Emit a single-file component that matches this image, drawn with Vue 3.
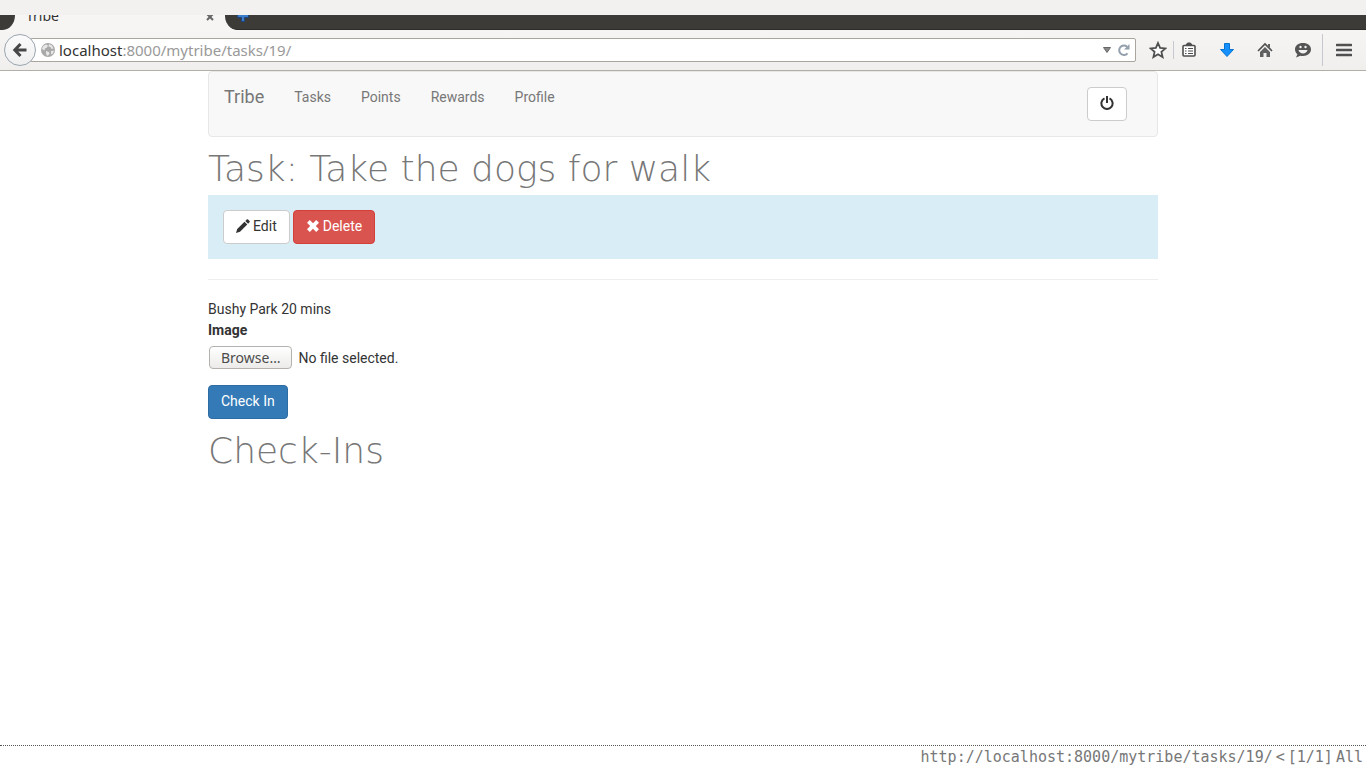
<script setup>
import { ref } from 'vue'

const links = ['Tasks', 'Points', 'Rewards', 'Profile']
const address = ref('localhost:8000/mytribe/tasks/19/')
const fileName = ref('No file selected.')

function pickFile(event) {
  const file = event.target.files[0]
  fileName.value = file ? file.name : 'No file selected.'
}
</script>

<template>
  <div class="window">
    <header class="chrome">
      <div class="titlebar"></div>
      <div class="tabstrip">
        <div class="tab">
          <span class="tab-title">Tribe</span>
          <button class="tab-close" aria-label="Close tab">
            <svg width="8" height="8" viewBox="0 0 8 8"><path d="M1 1l6 6M7 1L1 7" stroke="#666" stroke-width="2" /></svg>
          </button>
        </div>
        <div class="strip-rest">
          <button class="new-tab" aria-label="New tab">
            <svg width="12" height="12" viewBox="0 0 12 12"><path d="M4.5 .5h3v4h4v3h-4v4h-3v-4h-4v-3h4z" fill="#3d7cc9" stroke="#1c447d" /></svg>
          </button>
        </div>
      </div>
      <div class="toolbar">
        <button class="back" aria-label="Back">
          <svg width="16" height="16" viewBox="0 0 16 16"><path d="M8.500 2L2.800 8l5.700 6M3 8h11.500" fill="none" stroke="#474747" stroke-width="3" /></svg>
        </button>
        <div class="urlbar">
          <svg class="globe" width="14" height="14" viewBox="0 0 14 14">
            <circle cx="7" cy="7" r="7" fill="#a9a9a9" />
            <path d="M2 3l3-1.500 2 1-1 2-2 1-.5 2L1 6zM8 1l3 1.500 1.500 3-2 .5-1-2-2-.5zM5 8l3 1 .5 2-2 2-1.500-2zM10 8l3-.5-1 3-2 1z" fill="#e7e7e7" />
          </svg>
          <div class="address">
            <input v-model="address" aria-label="Address" />
            <span class="address-text" aria-hidden="true"><b>localhost</b>:8000/mytribe/tasks/19/</span>
          </div>
          <button class="drop" aria-label="Show history">
            <svg width="8" height="6" viewBox="0 0 8 6"><path d="M.5 .5h7L4 5.500z" fill="#888" stroke="#666" /></svg>
          </button>
          <button class="reload" aria-label="Reload">
            <svg width="12" height="12" viewBox="0 0 12 12"><path d="M9.500 9.300A4.700 4.700 0 1 1 9 2.700" fill="none" stroke="#93a0ac" stroke-width="2" /><path d="M11.500 0v5.500H6z" fill="#93a0ac" /></svg>
          </button>
        </div>
        <div class="tools">
          <button aria-label="Bookmark this page">
            <svg width="18" height="18" viewBox="0 0 18 18"><path d="M9 2l2.100 4.900 5.300.5-4 3.500 1.200 5.200L9 13.300l-4.600 2.800 1.200-5.200-4-3.500 5.300-.5z" fill="#fff" stroke="#4f4f4f" stroke-width="1.800" /></svg>
          </button>
          <i class="short-line"></i>
          <button aria-label="Show bookmarks">
            <svg width="14" height="16" viewBox="0 0 14 16"><rect x="1" y="3.500" width="12" height="10.500" rx="1" fill="#fff" stroke="#4f4f4f" stroke-width="1.600" /><path d="M4 3l1.500-2h3L10 3z" fill="#4f4f4f" stroke="#4f4f4f" /><path d="M3 6.500h1.500M6 6.500h5M3 9h1.500M6 9h5M3 11.500h1.500M6 11.500h5" stroke="#4f4f4f" stroke-width="1.200" /></svg>
          </button>
          <button aria-label="Downloads">
            <svg width="16" height="16" viewBox="0 0 16 16"><path d="M5.500 1.500h5v6h4L8 14.500l-6.500-7h4z" fill="#1690ff" stroke="#0672d2" /></svg>
          </button>
          <button aria-label="Home">
            <svg width="16" height="16" viewBox="0 0 16 16"><path d="M1 9l7-7 7 7" fill="none" stroke="#4f4f4f" stroke-width="1.600" /><path d="M11 2h2v4l-2-2zM8 5l5 5v5H9.500v-4h-3v4H3v-5z" fill="#606060" /></svg>
          </button>
          <button aria-label="Chat">
            <svg width="16" height="16" viewBox="0 0 16 16"><path d="M8 1c4.700 0 8 2.500 8 6.300S12.700 14 8 14c-1 0-1.800-.1-2.600-.3L1 15.500l1.400-3.300C.9 11 0 9.400 0 7.300 0 3.500 3.300 1 8 1z" fill="#555" /><path d="M3.500 8h9c-.5 2.300-2.300 3.500-4.500 3.500S4 10.300 3.500 8z" fill="#f2f2f2" /><circle cx="5.500" cy="5" r="1.200" fill="#f2f2f2" /><circle cx="10.500" cy="5" r="1.200" fill="#f2f2f2" /></svg>
          </button>
          <i class="long-line"></i>
          <button aria-label="Menu">
            <svg width="16" height="14" viewBox="0 0 16 14"><path d="M1 2h14M1 7h14M1 12h14" stroke="#505050" stroke-width="2.600" stroke-linecap="round" /></svg>
          </button>
        </div>
      </div>
    </header>

    <main class="page">
      <nav class="navbar">
        <a class="brand" href="#">Tribe</a>
        <a v-for="link in links" :key="link" class="nav-link" href="#">{{ link }}</a>
        <button class="btn btn-default power" aria-label="Log out">
          <svg width="14" height="14" viewBox="0 0 14 14"><path d="M4.500 2.400a5.600 5.600 0 1 0 5 0" fill="none" stroke="#333" stroke-width="2" /><path d="M7 0v7" stroke="#333" stroke-width="2" /></svg>
        </button>
      </nav>

      <h2>Task: Take the dogs for walk</h2>

      <div class="actions">
        <button class="btn btn-default">
          <svg width="14" height="14" viewBox="0 0 14 14"><path d="M0 14l1.200-4L8.500 2.700l2.800 2.800L4 12.800zM9.300 1.900L10.700.5q.7-.7 1.400 0l1.400 1.400q.7.700 0 1.400l-1.400 1.400z" fill="#333" /></svg>
          <span>Edit</span>
        </button>
        <button class="btn btn-danger">
          <svg width="14" height="14" viewBox="0 0 14 14"><path d="M3.800 1L7 4.200 10.200 1 13 3.800 9.800 7l3.200 3.200-2.800 2.800L7 9.800 3.800 13 1 10.200 4.200 7 1 3.800z" fill="#fff" /></svg>
          <span>Delete</span>
        </button>
      </div>

      <hr />

      <form @submit.prevent>
        <p>Bushy Park 20 mins</p>
        <label class="field-label" for="image">Image</label>
        <label class="file" for="image">
          <input id="image" type="file" @change="pickFile" />
          <span class="browse">Browse…</span>
          <span>{{ fileName }}</span>
        </label>
        <button class="btn btn-primary">Check In</button>
      </form>

      <h2>Check-Ins</h2>
    </main>

    <footer class="status">
      <span>http://localhost:8000/mytribe/tasks/19/</span>
      <span>&lt;</span>
      <span>[1/1]</span>
      <span>All</span>
    </footer>
  </div>
</template>

<style>
body {
  margin: 0;
  background: #fff;
}
</style>

<style scoped>
.window {
  display: flex;
  flex-direction: column;
  min-height: 100vh;
  color: #333;
  font: 14px/20px Roboto, sans-serif;
}
.window * {
  box-sizing: border-box;
}
button {
  font: inherit;
  cursor: pointer;
}
svg {
  display: block;
  flex: none;
}
.chrome {
  font-family: "Noto Sans", sans-serif;
  border-bottom: 1px solid #b3aea8;
  background: #f2f1f0;
}
.chrome button {
  display: flex;
  align-items: center;
  justify-content: center;
  padding: 0;
  border: 0;
  background: none;
}
.titlebar {
  height: 15px;
}
.tabstrip {
  display: flex;
  height: 15px;
  overflow: hidden;
  background: #f6f5f4;
}
.tabstrip::before {
  content: "";
  width: 15px;
  background: #3c3b37;
  border-bottom-right-radius: 12px 15px;
}
.tab {
  display: flex;
  justify-content: space-between;
  width: 210px;
  padding: 0 11px;
}
.tab-title {
  line-height: 2px;
  font-size: 14px;
}
.chrome .tab-close {
  height: 4px;
}
.strip-rest {
  flex: 1;
  padding-left: 12px;
  background: #3c3b37;
  border-bottom: 1px solid #2c2b28;
  border-bottom-left-radius: 12px 15px;
}
.chrome .new-tab {
  height: 2px;
}
.toolbar {
  display: flex;
  align-items: center;
  height: 40px;
  padding: 0 1px 0 4px;
  background: linear-gradient(#f6f5f4, #f0efed);
}
.chrome .back {
  position: relative;
  z-index: 1;
  width: 32px;
  height: 32px;
  border: 1px solid #9ba5b0;
  border-radius: 50%;
  background: linear-gradient(#fbfbfb, #efefef);
}
.urlbar {
  display: flex;
  flex: 1;
  align-items: center;
  height: 24px;
  margin-left: -6px;
  padding: 0 5px 0 10px;
  border: 1px solid #aaa59f;
  border-radius: 2px;
  background: #fff;
}
.address {
  position: relative;
  flex: 1;
  height: 20px;
  margin-left: 4px;
  font-size: 15px;
}
.address input {
  width: 100%;
  height: 20px;
  padding: 0;
  border: 0;
  outline: 0;
  color: transparent;
  caret-color: #333;
  background: none;
  font: inherit;
}
.address-text {
  position: absolute;
  inset: 0;
  color: #999;
  pointer-events: none;
}
.address-text b {
  color: #333;
  font-weight: 400;
}
.reload {
  margin-left: 7px;
}
.tools {
  display: flex;
  align-items: center;
  margin-left: 13px;
}
.tools button {
  width: 38px;
  height: 32px;
}
.tools button:first-child {
  width: 18px;
}
.tools button:last-child {
  width: 42px;
}
.short-line,
.long-line {
  width: 1px;
  height: 18px;
  background: #c5c8cc;
}
.short-line {
  margin-left: 6px;
  margin-right: -4px;
}
.long-line {
  height: 32px;
}
.page {
  flex: 1;
  width: 100%;
  max-width: 950px;
  margin: 0 auto;
}
.navbar {
  display: flex;
  align-items: flex-start;
  min-height: 66px;
  padding: 15px;
  border: 1px solid #e7e7e7;
  border-radius: 4px;
  background: #f8f8f8;
}
.navbar a {
  color: #777;
  text-decoration: none;
}
.brand {
  margin-right: 30px;
  font-size: 18px;
}
.nav-link {
  margin-right: 30px;
}
.power {
  margin-left: auto;
  margin-right: 15px;
}
.btn {
  display: inline-flex;
  align-items: center;
  gap: 3px;
  height: 34px;
  padding: 0 12px 2px;
  border: 1px solid #ccc;
  border-radius: 4px;
  background: #fff;
  color: #333;
}
.btn-danger {
  border-color: #d43f3a;
  background: #d9534f;
  color: #fff;
}
.btn-primary {
  border-color: #2e6da4;
  background: #337ab7;
  color: #fff;
}
h2 {
  margin: 16px 0 10px;
  color: #777;
  font: 200 36px/32px "DejaVu Sans", sans-serif;
}
.actions {
  display: flex;
  gap: 3px;
  padding: 15px;
  background: #d9edf7;
}
hr {
  margin: 20px 0 19px;
  border: 0;
  border-top: 1px solid #eee;
}
p {
  margin: 0 0 1px;
}
.field-label {
  display: block;
  margin-bottom: 6px;
  font-weight: 700;
}
.file {
  display: flex;
  align-items: center;
  gap: 6px;
  margin: 0 1px 16px;
}
.file input {
  position: absolute;
  width: 1px;
  height: 1px;
  opacity: 0;
}
.browse {
  padding: 0 11px;
  border: 1px solid #b5b1ad;
  border-radius: 4px;
  background: linear-gradient(#fff, #ecebe9);
  color: #4c4c4c;
  font: 14px/21px "Noto Sans", sans-serif;
}
.status {
  display: flex;
  justify-content: flex-end;
  gap: 3px;
  padding: 1px 3px 1px 0;
  border-top: 1px dotted #555;
  color: #777;
  font: 15px/20px "DejaVu Sans Mono", monospace;
}
</style>
